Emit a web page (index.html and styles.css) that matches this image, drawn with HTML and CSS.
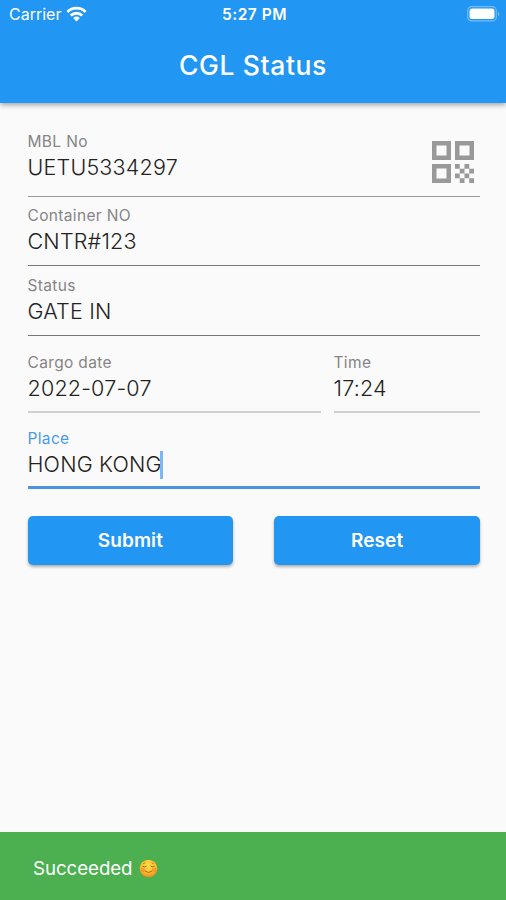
FILE: index.html
```html
<!DOCTYPE html>
<html lang="en">
<head>
  <meta charset="UTF-8">
  <meta name="viewport" content="width=device-width, initial-scale=1.0">
  <title>CGL Status</title>
  <link rel="stylesheet" href="styles.css">
</head>
<body>
  <div id="app">
    <header>
      <div class="status-bar">
        <div class="carrier">
          <span>Carrier</span>
          <svg width="21" height="16" viewBox="0 0 22 16" fill="none" stroke="#fff" stroke-width="3">
            <path d="M1.5 5.800a13.500 13.500 0 0 1 19 0"/>
            <path d="M5 9.600a8.600 8.600 0 0 1 12 0"/>
            <path d="M11 15.800L7.500 12.200a4.800 4.800 0 0 1 7 0z" fill="#fff" stroke="none"/>
          </svg>
        </div>
        <span class="clock">5:27 PM</span>
        <svg class="battery" width="34" height="16" viewBox="0 0 34 16">
          <rect x="0.7" y="0.7" width="28.6" height="14.2" rx="4" fill="none" stroke="#78bcf8" stroke-width="1.2"/>
          <rect x="2.5" y="2.5" width="25" height="10.6" rx="2.4" fill="#fff"/>
          <path d="M31 5.4a2.8 2.8 0 0 1 0 4.8z" fill="#78bcf8"/>
        </svg>
      </div>
      <h1>CGL Status</h1>
    </header>

    <main>
      <div class="field mbl">
        <div>
          <div class="label">MBL No</div>
          <div class="value">UETU5334297</div>
        </div>
        <svg class="qr" width="42" height="42" viewBox="0 0 42 42" fill="#999">
          <path fill-rule="evenodd" d="M0 0h19v19H0zM4.5 4.5v10h10v-10zM23 0h19v19H23zM27.5 4.5v10h10v-10zM0 23h19v19H0zM4.5 27.5v10h10v-10z"/>
          <path d="M23 23h4.750v4.750H23zM32.500 23h4.750v4.750H32.500zM27.750 27.750h4.750v4.750h-4.750zM37.250 27.750H42v4.750h-4.750zM23 32.500h4.750v4.750H23zM32.500 32.500h4.750v4.750H32.500zM27.750 37.250h4.750V42h-4.750zM37.250 37.250H42V42h-4.750z"/>
        </svg>
      </div>

      <div class="field container-no">
        <div class="label">Container NO</div>
        <div class="value">CNTR#123</div>
      </div>

      <div class="field status">
        <div class="label">Status</div>
        <div class="value">GATE IN</div>
      </div>

      <div class="row">
        <div class="field picker date">
          <div class="label">Cargo date</div>
          <div class="value">2022-07-07</div>
        </div>
        <div class="field picker time">
          <div class="label">Time</div>
          <div class="value">17:24</div>
        </div>
      </div>

      <div class="field place focused">
        <div class="label">Place</div>
        <div class="value">HONG KONG<span class="cursor"></span></div>
      </div>

      <div class="buttons">
        <button type="button">Submit</button>
        <button type="button">Reset</button>
      </div>
    </main>

    <div class="snackbar">
      <span>Succeeded</span>
      <svg width="19" height="19" viewBox="0 0 19 19">
        <defs>
          <radialGradient id="face" cx="50%" cy="35%" r="65%">
            <stop offset="0" stop-color="#ffe04a"/>
            <stop offset="0.6" stop-color="#fdc02f"/>
            <stop offset="1" stop-color="#ee8a1d"/>
          </radialGradient>
        </defs>
        <circle cx="9.5" cy="9.5" r="8.800" fill="url(#face)"/>
        <circle cx="4" cy="10.8" r="2.2" fill="#f4762c" opacity="0.5"/>
        <circle cx="15" cy="10.8" r="2.2" fill="#f4762c" opacity="0.5"/>
        <g fill="none" stroke="#a8661a" stroke-width="1" stroke-linecap="round">
          <path d="M3.8 7.3q1.7 1.5 3.4 0M11.8 7.3q1.7 1.5 3.4 0"/>
          <path d="M6.3 12.3q3.2 2.6 6.4 0"/>
          <path d="M4.5 4.6l1.6-.7M14.5 4.6l-1.6-.7" stroke-width="0.7"/>
        </g>
      </svg>
    </div>
  </div>
</body>
</html>
```
FILE: styles.css
```css
* {
  box-sizing: border-box;
}
body {
  margin: 0;
  background: #fafafa;
  color: #222;
  font-family: Inter, "Liberation Sans", sans-serif;
}
#app {
  display: flex;
  flex-direction: column;
  height: 900px;
}
header {
  height: 103px;
  background: #2196f3;
  color: #fff;
  box-shadow: 0 2px 5px rgba(0, 0, 0, 0.35);
}
.status-bar {
  display: grid;
  grid-template-columns: 1fr auto 1fr;
  align-items: center;
  height: 28px;
  padding: 0 6px 0 9px;
  font-size: 16px;
}
.carrier {
  display: flex;
  align-items: center;
  gap: 5px;
}
.clock {
  font-weight: 600;
  font-size: 15.5px;
  letter-spacing: 0.5px;
}
.battery {
  justify-self: end;
  margin-right: -1px;
}
h1 {
  margin: 20px 0 0;
  font-size: 26.5px;
  font-weight: 500;
  line-height: 34px;
  text-align: center;
  letter-spacing: 0.6px;
}
main {
  flex: 1;
  padding: 27px 26px 0 27.5px;
}
.field {
  border-bottom: 1px solid #777;
}
.label {
  padding-top: 1px;
  color: #858585;
  font-size: 15.5px;
  line-height: 21px;
  letter-spacing: 0.35px;
}
.value {
  font-size: 21.5px;
  font-weight: 300;
  line-height: 30px;
  letter-spacing: 0.2px;
}
.mbl {
  display: flex;
  justify-content: space-between;
  height: 67px;
  border-color: #999;
}
.qr {
  margin: 11px 6px 0 0;
}
.container-no {
  height: 62px;
  margin-top: 7px;
}
.status {
  height: 62px;
  margin-top: 8px;
}
.row {
  display: flex;
  gap: 13px;
  margin-top: 15px;
}
.picker {
  height: 62px;
  border-bottom: 2px solid #d0d0d0;
}
.date {
  flex: 1;
}
.time {
  width: 146.5px;
}
.place {
  height: 62px;
  margin-top: 14px;
}
.focused {
  border-bottom: 3px solid #4a96e3;
}
.focused .label {
  color: #4a9bec;
}
.cursor {
  display: inline-block;
  width: 3px;
  height: 28px;
  margin-left: -2px;
  vertical-align: -7px;
  background: #7fb5f0;
}
.buttons {
  display: flex;
  gap: 41px;
  margin-top: 27px;
}
button {
  flex: 1;
  height: 49px;
  border: 0;
  border-radius: 5px;
  background: #2196f3;
  color: #fff;
  font: 600 19px Inter, "Liberation Sans", sans-serif;
  letter-spacing: 0.1px;
  box-shadow: 0 2px 3px rgba(0, 0, 0, 0.3);
}
.snackbar {
  display: flex;
  align-items: center;
  gap: 6px;
  height: 68px;
  padding: 4px 33px 0;
  background: #4caf50;
  color: #fff;
  font-size: 18.7px;
  letter-spacing: -0.05px;
}
```
